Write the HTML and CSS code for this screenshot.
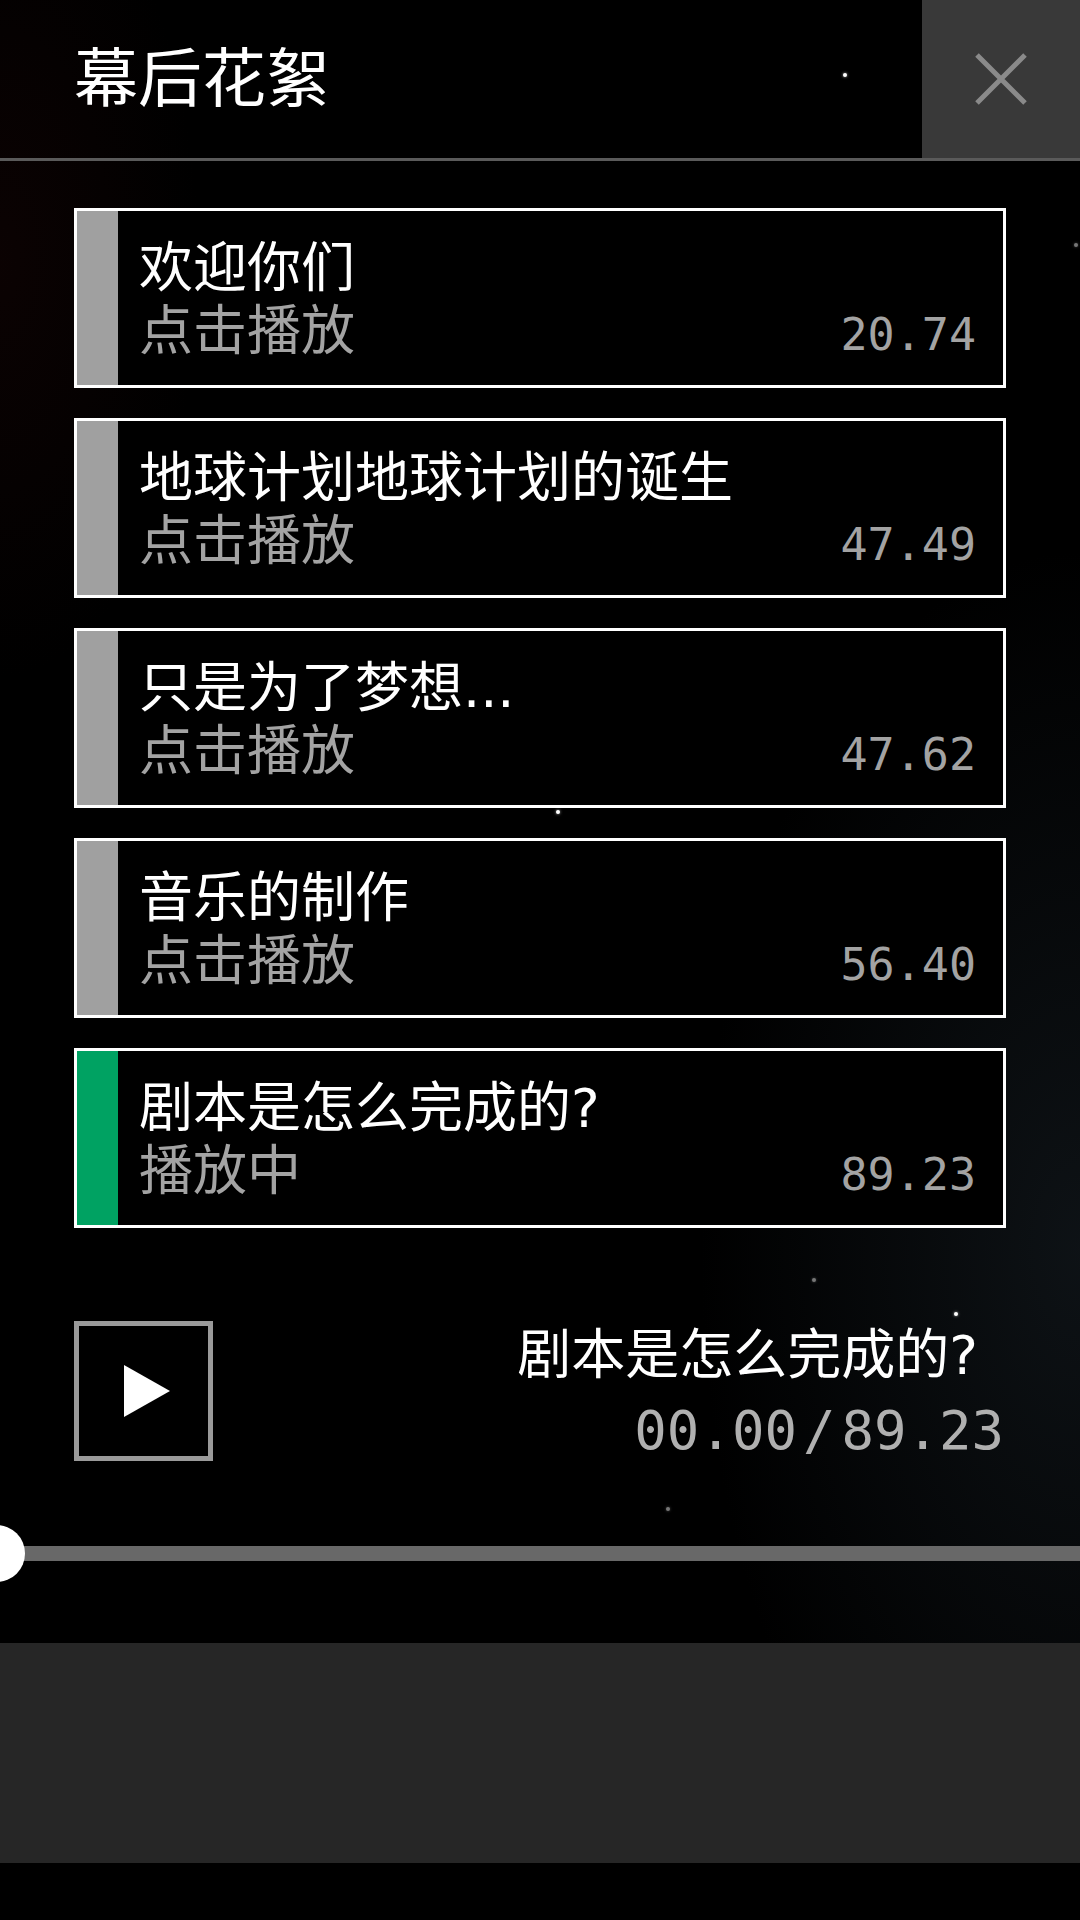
FILE: index.html
```html
<!DOCTYPE html>
<html lang="zh-CN">

<head>
    <meta charset="UTF-8">
    <meta name="viewport" content="width=device-width, initial-scale=1.0">
    <title>幕后花絮</title>
    <link rel="stylesheet" href="styles.css">
</head>

<body>

    <div class="app">
        <div class="sky">
            <span class="star" style="left: 843px; top: 73px;"></span>
            <span class="star" style="left: 250px; top: 222px;"></span>
            <span class="star faint" style="left: 1074px; top: 243px;"></span>
            <span class="star" style="left: 792px; top: 515px;"></span>
            <span class="star" style="left: 278px; top: 651px;"></span>
            <span class="star faint" style="left: 554px; top: 767px;"></span>
            <span class="star" style="left: 556px; top: 810px;"></span>
            <span class="star faint" style="left: 946px; top: 789px;"></span>
            <span class="star faint" style="left: 812px; top: 1278px;"></span>
            <span class="star" style="left: 954px; top: 1312px;"></span>
            <span class="star faint" style="left: 666px; top: 1507px;"></span>
        </div>

        <div class="header">
            <div class="header-title">幕后花絮</div>
            <div class="close-btn">
                <svg width="52" height="52" viewBox="0 0 52 52">
                    <path d="M2 2 L50 50 M50 2 L2 50" stroke="#8a8a8a" stroke-width="5" fill="none" />
                </svg>
            </div>
        </div>

        <div class="list">
            <div class="card">
                <div class="card-bar"></div>
                <div class="card-body">
                    <div class="card-title">欢迎你们</div>
                    <div class="card-row">
                        <span class="card-state">点击播放</span>
                        <span class="card-time">20.74</span>
                    </div>
                </div>
            </div>
            <div class="card">
                <div class="card-bar"></div>
                <div class="card-body">
                    <div class="card-title">地球计划地球计划的诞生</div>
                    <div class="card-row">
                        <span class="card-state">点击播放</span>
                        <span class="card-time">47.49</span>
                    </div>
                </div>
            </div>
            <div class="card">
                <div class="card-bar"></div>
                <div class="card-body">
                    <div class="card-title">只是为了梦想...</div>
                    <div class="card-row">
                        <span class="card-state">点击播放</span>
                        <span class="card-time">47.62</span>
                    </div>
                </div>
            </div>
            <div class="card">
                <div class="card-bar"></div>
                <div class="card-body">
                    <div class="card-title">音乐的制作</div>
                    <div class="card-row">
                        <span class="card-state">点击播放</span>
                        <span class="card-time">56.40</span>
                    </div>
                </div>
            </div>
            <div class="card active">
                <div class="card-bar"></div>
                <div class="card-body">
                    <div class="card-title">剧本是怎么完成的?</div>
                    <div class="card-row">
                        <span class="card-state">播放中</span>
                        <span class="card-time">89.23</span>
                    </div>
                </div>
            </div>
        </div>

        <div class="player">
            <div class="play-btn">
                <svg width="50" height="54" viewBox="0 0 50 54">
                    <path d="M2 1 L48 27 L2 53 Z" fill="#fff" />
                </svg>
            </div>
            <div class="now-playing">
                <div class="now-title">剧本是怎么完成的?</div>
                <div class="now-time">00.00<span class="sep">/</span>89.23</div>
            </div>
        </div>

        <div class="progress">
            <div class="progress-knob"></div>
        </div>
    </div>

    <div class="panel"></div>

</body>

</html>
```

FILE: styles.css
```css
body {
    margin: 0;
    padding: 0;
    width: 1080px;
    height: 1920px;
    overflow: hidden;
    background-color: #000;
    font-family: "DejaVu Sans", "Noto Sans CJK SC", sans-serif;
    color: #fff;
}

.app {
    position: relative;
    height: 1643px;
    overflow: hidden;
    background-color: #000;
    background-image:
        radial-gradient(ellipse 200px 420px at 0px 260px, rgba(50, 10, 10, 0.22), transparent),
        radial-gradient(ellipse 380px 700px at 1080px 1250px, rgba(30, 40, 48, 0.45), transparent);
}

/* 背景星点 */
.sky {
    position: absolute;
    left: 0;
    top: 0;
    width: 100%;
    height: 100%;
}

.star {
    position: absolute;
    width: 4px;
    height: 4px;
    border-radius: 50%;
    background-color: #fff;
    box-shadow: 0 0 3px rgba(255, 255, 255, 0.7);
}

.star.faint {
    background-color: #777;
    box-shadow: 0 0 3px rgba(255, 255, 255, 0.3);
}

.header {
    position: relative;
    display: flex;
    height: 158px;
    border-bottom: 3px solid #5a5a5a;
}

.header-title {
    flex: 1;
    padding-left: 74px;
    font-family: "Noto Sans CJK SC", sans-serif;
    font-size: 64px;
    line-height: 146px;
    color: #fff;
}

.close-btn {
    width: 158px;
    display: flex;
    align-items: center;
    justify-content: center;
    background-color: #393939;
}

.list {
    position: relative;
    padding: 47px 74px 0;
    display: flex;
    flex-direction: column;
    gap: 30px;
}

.card {
    display: flex;
    height: 180px;
    box-sizing: border-box;
    border: 3px solid #fff;
    background-color: #000;
}

.card-bar {
    width: 41px;
    background-color: #a0a0a0;
}

.card.active .card-bar {
    background-color: #00a262;
}

.card-body {
    flex: 1;
    padding: 26px 27px 0 21px;
}

.card-title {
    font-size: 54px;
    line-height: 63px;
    color: #fff;
    white-space: nowrap;
}

.card-row {
    display: flex;
    justify-content: space-between;
    align-items: baseline;
    line-height: 63px;
}

.card-state {
    font-size: 54px;
    color: #a3a3a3;
}

.card-time {
    font-family: "DejaVu Sans Mono", monospace;
    font-size: 45px;
    color: #a3a3a3;
}

.player {
    position: relative;
    display: flex;
    justify-content: space-between;
    align-items: flex-start;
    margin-top: 93px;
    padding: 0 76px 0 74px;
}

.play-btn {
    width: 139px;
    height: 140px;
    box-sizing: border-box;
    border: 5px solid #9a9a9a;
    display: flex;
    align-items: center;
    justify-content: center;
    padding-left: 7px;
}

.now-playing {
    text-align: right;
    padding-top: 3px;
}

.now-title {
    font-size: 54px;
    line-height: 63px;
    color: #fff;
    padding-right: 26px;
}

.now-time {
    margin-top: 14px;
    font-family: "DejaVu Sans Mono", monospace;
    font-size: 54px;
    line-height: 60px;
    color: #b0b0b0;
}

.sep {
    margin: 0 6px;
}

.progress {
    position: relative;
    margin-top: 85px;
    height: 15px;
    background-color: #686868;
}

.progress-knob {
    position: absolute;
    left: -32px;
    top: -21px;
    width: 57px;
    height: 57px;
    border-radius: 50%;
    background-color: #fff;
}

.panel {
    height: 220px;
    background-color: #262626;
}
```
